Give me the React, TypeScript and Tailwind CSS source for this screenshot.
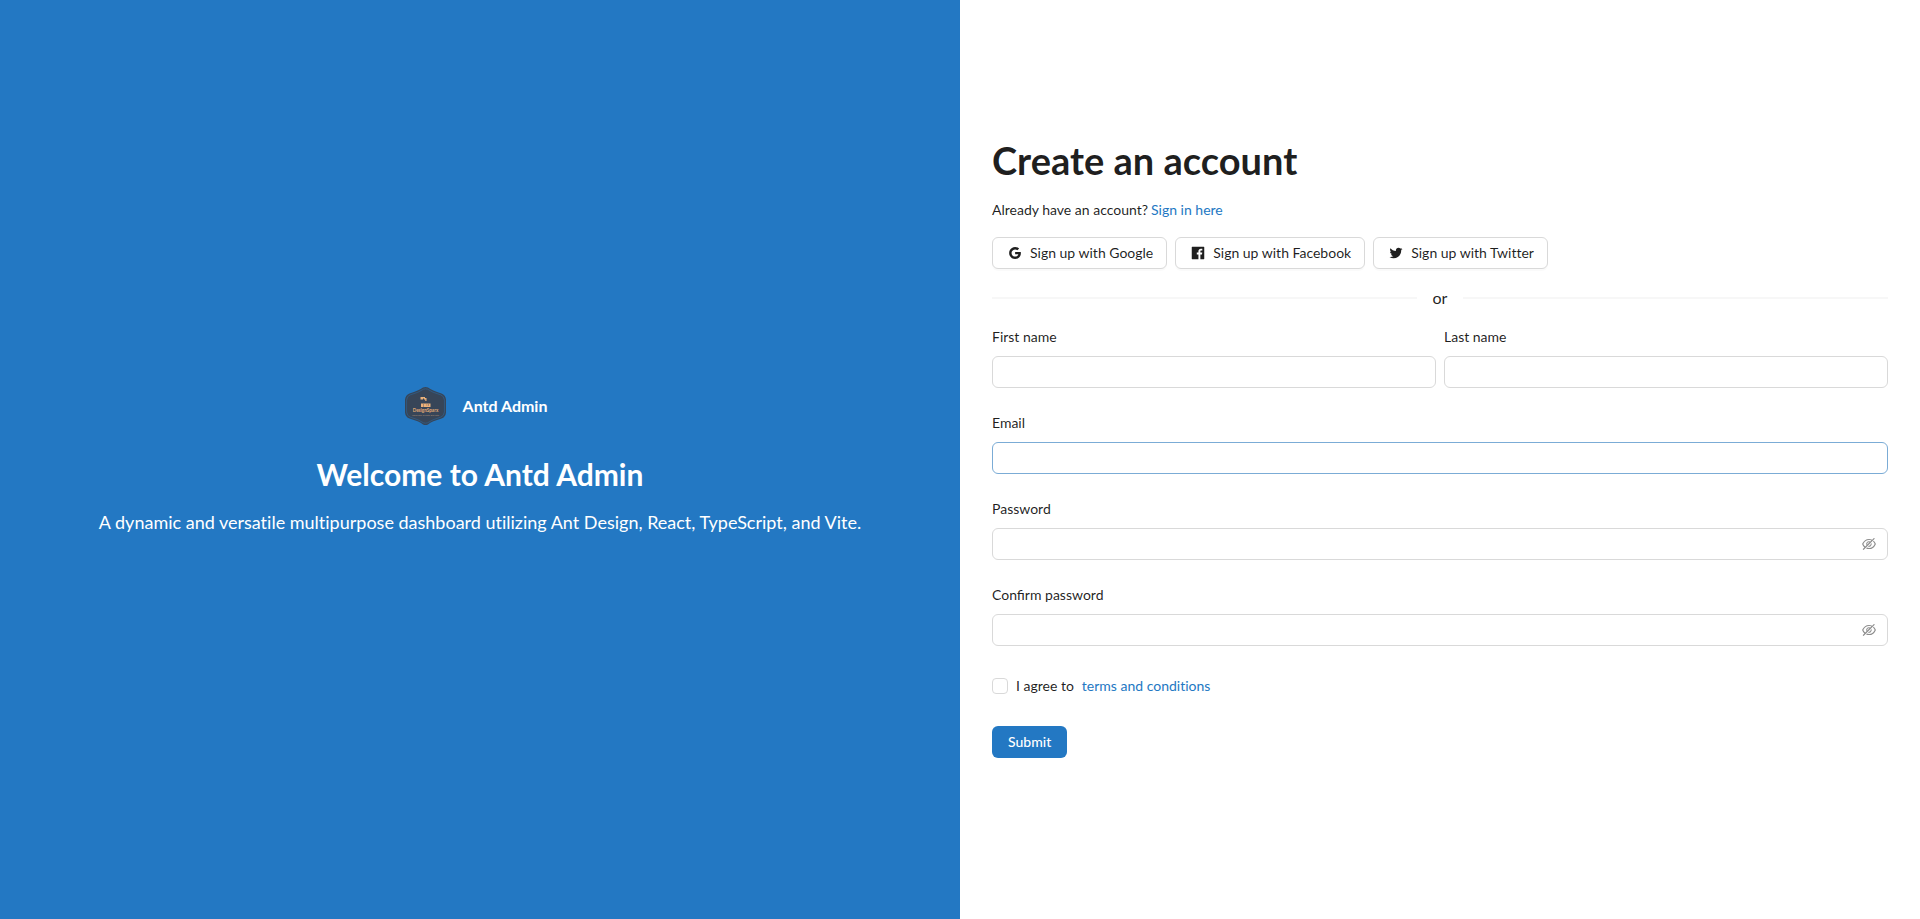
import { useId } from "react";
import type { ReactNode } from "react";
import {
  AiFillFacebook,
  AiOutlineEyeInvisible,
  AiOutlineGoogle,
  AiOutlineTwitter,
} from "react-icons/ai";

const BORDER = "border border-[#d9d9d9]";

function Logo() {
  return (
    <svg viewBox="0 0 48 48" className="size-12" role="img" aria-label="DesignSparx">
      <path
        d="M22 5.6Q24.500 4.400 27 5.600Q31 8.600 40.500 11.400Q44.500 12.800 45 17.500V30.500Q44.500 35.200 40.500 36.600Q31 39.400 27 42.400Q24.500 43.600 22 42.400Q18 39.400 8.500 36.600Q4.500 35.200 4 30.500V17.500Q4.500 12.800 8.500 11.400Q18 8.600 22 5.600Z"
        fill="#374558"
      />
      <path
        d="M22.500 7.200Q24.500 6.400 26.500 7.200Q31 10.400 39.800 12.900Q43 14 43.400 18V30Q43 34 39.800 35.100Q31 37.600 26.500 40.800Q24.500 41.600 22.500 40.800Q18 37.600 9.200 35.100Q6 34 5.600 30V18Q6 14 9.200 12.900Q18 10.400 22.500 7.200Z"
        fill="none"
        stroke="#2f628f"
        strokeWidth="0.7"
      />
      <g fill="#edb27a">
        <path d="M19.500 15h4.500v1h1.500v3h-1.200v-1.500h-1.300v-1h-1v1h-2.500z" />
        <path d="M20 21.500h9.500v3.500h-9.500z" />
      </g>
      <path d="M22.500 22v3M25 23h1.500M27.500 22v2" stroke="#8d7565" strokeWidth="0.7" />
      <text x="24.500" y="30" textAnchor="middle" fontSize="4.6" fontWeight="700" fill="#e2aa76">
        DesignSparx
      </text>
      <text x="24.500" y="34" textAnchor="middle" fontSize="2.600" fill="#a58a74">
        Innovate Create Elevate
      </text>
    </svg>
  );
}

function SocialButton({ icon, children }: { icon: ReactNode; children: ReactNode }) {
  return (
    <button
      type="button"
      className={`flex h-8 items-center gap-[7px] rounded-md bg-white pr-[13px] pl-[14px] shadow-[0_2px_0_rgba(0,0,0,0.02)] ${BORDER}`}
    >
      {icon}
      <span>{children}</span>
    </button>
  );
}

function Field({
  label,
  type = "text",
  active = false,
}: {
  label: string;
  type?: string;
  active?: boolean;
}) {
  const id = useId();
  const border = active ? "border border-[#7bacd6]" : BORDER;
  return (
    <div className="flex min-w-0 flex-1 flex-col gap-2">
      <label htmlFor={id} className="[font-variant-ligatures:normal]">
        {label}
      </label>
      <div className={`flex h-8 items-center rounded-md bg-white pr-[10px] pl-[11px] ${border}`}>
        <input id={id} type={type} className="h-full min-w-0 flex-1 outline-none" />
        {type === "password" && (
          <button type="button" aria-label="Show password" className="text-black/45">
            <AiOutlineEyeInvisible size={16} />
          </button>
        )}
      </div>
    </div>
  );
}

export default function App() {
  return (
    <main className="grid min-h-screen grid-cols-2 bg-white font-[Lato,sans-serif] text-[14px] leading-[22px] text-black/88 [font-variant-ligatures:no-common-ligatures]">
      <section className="flex flex-col items-center justify-center bg-[#2378c3] px-8 text-center text-white">
        <div className="mb-[25px] flex items-center gap-[14px] pr-3">
          <Logo />
          <span className="text-[16px] leading-6 font-bold">Antd Admin</span>
        </div>
        <h2 className="mb-[14px] text-[30px] leading-[38px] font-bold">Welcome to Antd Admin</h2>
        <p className="text-[18px] leading-[30px]">
          A dynamic and versatile multipurpose dashboard utilizing Ant Design, React, TypeScript, and
          Vite.
        </p>
      </section>

      <section className="flex flex-col justify-center px-8">
        <h1 className="mb-4 text-[38px] leading-[46px] font-bold">Create an account</h1>
        <p className="mb-4 flex gap-[3px]">
          <span>Already have an account?</span>
          <a href="#sign-in" className="text-[#2378c3]">
            Sign in here
          </a>
        </p>
        <div className="flex flex-wrap gap-2">
          <SocialButton icon={<AiOutlineGoogle size={16} />}>Sign up with Google</SocialButton>
          <SocialButton icon={<AiFillFacebook size={16} />}>Sign up with Facebook</SocialButton>
          <SocialButton icon={<AiOutlineTwitter size={16} />}>Sign up with Twitter</SocialButton>
        </div>
        <div className="my-4 flex items-center gap-4 text-[16px] leading-[25px]">
          <span className="h-0.5 flex-1 bg-black/3" />
          <span>or</span>
          <span className="h-0.5 flex-1 bg-black/3" />
        </div>
        <form className="mb-6 flex flex-col gap-6" onSubmit={(event) => event.preventDefault()}>
          <div className="flex gap-2">
            <Field label="First name" />
            <Field label="Last name" />
          </div>
          <Field label="Email" type="email" active />
          <Field label="Password" type="password" />
          <Field label="Confirm password" type="password" />
          <div className="flex h-8 items-center gap-2">
            <label className="flex items-center gap-2">
              <input
                type="checkbox"
                className={`size-4 appearance-none rounded-sm bg-white checked:bg-[#2378c3] ${BORDER}`}
              />
              <span>I agree to</span>
            </label>
            <a href="#terms" className="text-[#2378c3]">
              terms and conditions
            </a>
          </div>
          <button
            type="submit"
            className="h-8 self-start rounded-md bg-[#2378c3] px-4 font-medium text-white"
          >
            Submit
          </button>
        </form>
      </section>
    </main>
  );
}
